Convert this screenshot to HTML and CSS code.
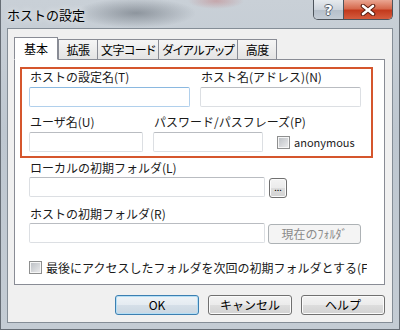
FILE: index.html
```html
<!DOCTYPE html>
<html lang="ja">
<head>
  <meta charset="UTF-8" />
  <title>ホストの設定</title>
  <link rel="stylesheet" href="styles.css">
</head>
<body>

  <div class="window">
    <div class="titlebar">
      <span class="title">ホストの設定</span>
      <div class="caption-buttons">
        <span class="cap-btn help">?</span>
        <span class="cap-btn close">
          <svg width="16" height="12" viewBox="0 0 16 12">
            <path d="M3 2 L13 10 M13 2 L3 10" stroke="#5a1d10" stroke-width="4.6" stroke-linecap="round" fill="none" />
            <path d="M3 2 L13 10 M13 2 L3 10" stroke="#ffffff" stroke-width="2.6" stroke-linecap="round" fill="none" />
          </svg>
        </span>
      </div>
    </div>

    <div class="client">
      <div class="tabs">
        <span class="tab active">基本</span>
        <span class="tab">拡張</span>
        <span class="tab">文字コード</span>
        <span class="tab">ダイアルアップ</span>
        <span class="tab">高度</span>
      </div>

      <div class="panel">
        <div class="highlight">
          <div class="row-top">
            <div class="field">
              <label>ホストの設定名(T)</label>
              <input type="text" class="focused" />
            </div>
            <div class="field">
              <label>ホスト名(アドレス)(N)</label>
              <input type="text" />
            </div>
          </div>
          <div class="row-bottom">
            <div class="field user">
              <label>ユーザ名(U)</label>
              <input type="text" />
            </div>
            <div class="field pass">
              <label>パスワード/パスフレーズ(P)</label>
              <input type="text" />
            </div>
            <div class="check">
              <span class="box"></span>
              <span class="check-text latin">anonymous</span>
            </div>
          </div>
        </div>

        <div class="lower">
          <label class="caption">ローカルの初期フォルダ(L)</label>
          <div class="path-row">
            <input type="text" class="path" />
            <button class="btn browse">...</button>
          </div>

          <label class="caption second">ホストの初期フォルダ(R)</label>
          <div class="path-row tight">
            <input type="text" class="path" />
            <button class="btn current" disabled>現在のﾌｫﾙﾀﾞ</button>
          </div>

          <div class="check last">
            <span class="box"></span>
            <span class="check-text clipped">最後にアクセスしたフォルダを次回の初期フォルダとする(F)</span>
          </div>
        </div>
      </div>

      <div class="actions">
        <button class="btn default">OK</button>
        <button class="btn">キャンセル</button>
        <button class="btn">ヘルプ</button>
      </div>
    </div>
  </div>

</body>
</html>
```

FILE: styles.css
```css
* {
  box-sizing: border-box;
}

body {
  margin: 0;
  width: 400px;
  height: 330px;
  overflow: hidden;
  font-family: "Noto Sans CJK JP", "Noto Sans", sans-serif;
  font-size: 12px;
  color: #1a1a1a;
}

.window {
  height: 330px;
  padding: 0 6px 6px;
  border: 1px solid #666d75;
  border-top: none;
  background:
    radial-gradient(ellipse 60px 15px at 135px 13px, rgba(70, 78, 88, 0.45), rgba(70, 78, 88, 0)),
    radial-gradient(ellipse 28px 8px at 215px 1px, rgba(190, 90, 90, 0.35), rgba(190, 90, 90, 0)),
    linear-gradient(#c9d0d7, #bec7d0 40%, #c4ccd4);
}

/* title bar */

.titlebar {
  display: flex;
  height: 28px;
}

.title {
  font-size: 13px;
  line-height: 30px;
  color: #000;
  text-shadow: 0 0 6px rgba(255, 255, 255, 0.9);
}

.caption-buttons {
  margin-left: auto;
  display: flex;
  height: 20px;
  border: 1px solid #4d545c;
  border-top: none;
  border-radius: 0 0 5px 5px;
  overflow: hidden;
}

.cap-btn {
  display: flex;
  align-items: center;
  justify-content: center;
}

.cap-btn.help {
  width: 30px;
  border-right: 1px solid #4d545c;
  background: linear-gradient(#e6eaee, #cdd4dc 50%, #b5bfca 51%, #c4ccd5);
  font-family: "DejaVu Sans", sans-serif;
  font-weight: bold;
  font-size: 14px;
  color: #fff;
  text-shadow: 1px 0 0 #56606b, -1px 0 0 #56606b, 0 1px 0 #56606b, 0 -1px 0 #56606b;
}

.cap-btn.close {
  width: 48px;
  background: linear-gradient(#eaa692, #d66a4e 45%, #c33a1d 55%, #d55c3e);
}

/* client */

.client {
  height: 295px;
  background: #f0f0f0;
  border: 1px solid #848d96;
  padding: 8px 7px 7px 6px;
  display: flex;
  flex-direction: column;
}

.tabs {
  display: flex;
  align-items: flex-end;
  height: 23px;
  margin-bottom: -1px;
  position: relative;
  z-index: 1;
}

.tab {
  height: 21px;
  min-width: 40px;
  padding: 0 3px;
  margin-left: -1px;
  border: 1px solid #898c95;
  background: linear-gradient(#f5f5f5, #e4e4e4);
  text-align: center;
  line-height: 19px;
  white-space: nowrap;
  letter-spacing: -0.5px;
  font-feature-settings: "palt";
  color: #000;
}

.tab.active {
  height: 23px;
  margin-left: 0;
  padding: 0 9px;
  letter-spacing: 0;
  background: #fff;
  border-bottom-color: #fff;
  line-height: 21px;
  position: relative;
  z-index: 2;
}

.tab.active + .tab {
  margin-left: 0;
}

.panel {
  height: 226px;
  background: #fff;
  border: 1px solid #898c95;
  padding: 7px 11px 11px 5px;
}

.highlight {
  border: 2px solid #d5562d;
  padding: 0 10px 4px 7px;
}

.row-top {
  display: grid;
  grid-template-columns: 161px 161px;
  column-gap: 10px;
}

.row-bottom {
  display: flex;
  align-items: flex-end;
  margin-top: 7px;
}

.field label {
  display: block;
  line-height: 16px;
  margin-bottom: 2px;
  padding-left: 1px;
  white-space: nowrap;
}

.field.user {
  width: 114px;
}

.field.pass {
  width: 110px;
  margin-left: 10px;
}

input[type="text"] {
  display: block;
  width: 100%;
  height: 20px;
  margin: 0;
  padding: 0 3px;
  border: 1px solid #dcdfe3;
  border-top-color: #b9bcc1;
  border-radius: 2px;
  background: #fff;
  font: inherit;
}

input.focused {
  border-color: #b1d0ec;
  border-top-color: #8ab8e0;
}

.check {
  display: flex;
  align-items: center;
  gap: 4px;
  height: 20px;
  margin-left: 14px;
}

.box {
  width: 13px;
  height: 13px;
  flex: none;
  border: 1px solid #8e8f8f;
  background: linear-gradient(135deg, #b9bdc2, #eeeeef);
  box-shadow: inset 0 0 0 1px #f6f6f6;
}

.check-text {
  white-space: nowrap;
}

.check-text.latin {
  font-size: 11px;
  color: #222;
}

.lower {
  padding-left: 9px;
}

.caption {
  display: block;
  line-height: 16px;
  margin-top: 2px;
  padding-left: 1px;
}

.caption.second {
  margin-top: 8px;
}

.path-row {
  display: flex;
  gap: 4px;
  margin-top: 1px;
}

.path-row.tight {
  gap: 3px;
}

input.path {
  width: 236px;
  flex: none;
}

.check.last {
  margin: 15px 0 0;
  height: 16px;
}

.clipped {
  max-width: 321px;
  overflow: hidden;
}

/* buttons */

.btn {
  height: 20px;
  margin: 0;
  padding: 0;
  border: 1px solid #707070;
  border-radius: 3px;
  background: linear-gradient(#f3f3f3, #ebebeb 50%, #dddddd 51%, #d2d2d2);
  box-shadow: inset 0 0 0 1px #fbfbfb;
  font: inherit;
  font-size: 12px;
  line-height: 18px;
  color: #000;
}

.btn.browse {
  width: 18px;
  margin-top: 1px;
  font-size: 9px;
  line-height: 14px;
}

.btn.current {
  width: 93px;
  margin-top: 1px;
  border-color: #adb2b5;
  background: #f4f4f4;
  box-shadow: none;
  color: #8a8a8a;
}

.actions {
  display: flex;
  justify-content: flex-end;
  gap: 9px;
  margin-top: 10px;
}

.actions .btn {
  width: 84px;
}

.btn.default {
  border-color: #3c7fb1;
  background: linear-gradient(#eef3f7, #e4ebf1 50%, #d5dfe8 51%, #cad7e2);
  box-shadow: inset 0 0 0 1px #b4def5;
}
```
